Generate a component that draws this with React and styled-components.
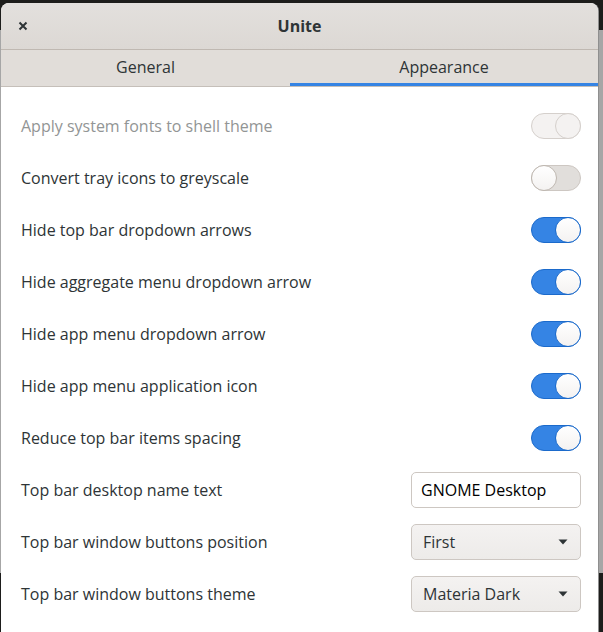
import React, { useState } from 'react'
import styled, { createGlobalStyle } from 'styled-components'

const GlobalStyle = createGlobalStyle`
  html, body {
    margin: 0;
    padding: 0;
  }
  body {
    background: linear-gradient(to bottom, #1d1d1b 0 30px, #a6a6a6 30px 573px, #1d1d1b 573px);
    font-family: "Open Sans", "Noto Sans", sans-serif;
    height: 632px;
    overflow: hidden;
  }
`

const rows = [
  { label: 'Apply system fonts to shell theme', type: 'switch', on: true, disabled: true },
  { label: 'Convert tray icons to greyscale', type: 'switch', on: false },
  { label: 'Hide top bar dropdown arrows', type: 'switch', on: true },
  { label: 'Hide aggregate menu dropdown arrow', type: 'switch', on: true },
  { label: 'Hide app menu dropdown arrow', type: 'switch', on: true },
  { label: 'Hide app menu application icon', type: 'switch', on: true },
  { label: 'Reduce top bar items spacing', type: 'switch', on: true },
  { label: 'Top bar desktop name text', type: 'entry', value: 'GNOME Desktop' },
  { label: 'Top bar window buttons position', type: 'combo', value: 'First' },
  { label: 'Top bar window buttons theme', type: 'combo', value: 'Materia Dark' },
]

function Toggle({ on, disabled }) {
  const [value, setValue] = useState(on)
  return (
    <Switch $on={value} $disabled={disabled} onClick={() => { if (!disabled) setValue(!value) }}>
      <Knob $on={value} $disabled={disabled} />
    </Switch>
  )
}

export default function App() {
  const [tab, setTab] = useState(1)

  return (
    <>
      <GlobalStyle />
      <Window>
        <HeaderBar>
          <CloseButton>
            <svg width="10" height="10" viewBox="0 0 10 10">
              <path d="M1.5 1.5 L8.5 8.5 M8.5 1.5 L1.5 8.5" stroke="#2e3436" strokeWidth="2" />
            </svg>
          </CloseButton>
          <Title>Unite</Title>
        </HeaderBar>
        <Tabs>
          {['General', 'Appearance'].map((name, i) => (
            <Tab key={name} $first={i === 0} $active={tab === i} onClick={() => setTab(i)}>{name}</Tab>
          ))}
        </Tabs>
        <Content>
          {rows.map((row) => (
            <Row key={row.label}>
              <Label $disabled={row.disabled}>{row.label}</Label>
              {row.type === 'switch' && <Toggle on={row.on} disabled={row.disabled} />}
              {row.type === 'entry' && <Entry defaultValue={row.value} />}
              {row.type === 'combo' && (
                <Combo>
                  <span>{row.value}</span>
                  <svg width="10" height="6" viewBox="0 0 10 6">
                    <path d="M0.5 0.5 L9.5 0.5 L5 5.5 Z" fill="#2e3436" />
                  </svg>
                </Combo>
              )}
            </Row>
          ))}
        </Content>
      </Window>
    </>
  )
}

const Window = styled.div`
  position: relative;
  margin: 3px 0 0 1px;
  width: 597px;
  height: 629px;
  background: #fff;
  border-radius: 8px 8px 0 0;
  overflow: hidden;
  display: flex;
  flex-direction: column;
  box-shadow: 1px 0 0 #8f8f8f;
`

const HeaderBar = styled.div`
  height: 46px;
  background: linear-gradient(to bottom, #e3e0dd, #dcd8d4);
  border-bottom: 1px solid #bfb8b1;
  display: flex;
  align-items: center;
  justify-content: center;
  position: relative;
`

const CloseButton = styled.div`
  position: absolute;
  left: 17px;
  top: 18px;
  width: 10px;
  height: 10px;
  display: flex;
`

const Title = styled.div`
  font-weight: 700;
  font-size: 16px;
  color: #2e3436;
  margin-top: -1px;
`

const Tabs = styled.div`
  display: flex;
  height: 36px;
  background: #e1ddd9;
  border-bottom: 1px solid #c5bfb9;
`

const Tab = styled.div`
  flex: ${p => (p.$first ? '0 0 289px' : '1')};
  display: flex;
  align-items: center;
  justify-content: center;
  font-size: 16px;
  color: #2e3436;
  box-sizing: border-box;
  padding-top: 1px;
  border-bottom: 3px solid ${p => (p.$active ? '#3584e4' : 'transparent')};
  cursor: pointer;
`

const Content = styled.div`
  flex: 1;
  padding: 13px 17px 0 20px;
  display: flex;
  flex-direction: column;
`

const Row = styled.div`
  height: 52px;
  display: flex;
  align-items: center;
  justify-content: space-between;
`

const Label = styled.div`
  font-size: 16px;
  color: ${p => (p.$disabled ? '#929595' : '#2e3436')};
`

const Switch = styled.div`
  width: 50px;
  height: 26px;
  box-sizing: border-box;
  border-radius: 13px;
  border: 1px solid ${p => (p.$disabled ? '#d5d0cc' : p.$on ? '#1b6acb' : '#cdc7c2')};
  background: ${p => (p.$disabled ? '#f4f2f1' : p.$on ? '#3584e4' : '#e1dedb')};
  display: flex;
  justify-content: ${p => (p.$on ? 'flex-end' : 'flex-start')};
  align-items: center;
  cursor: pointer;
`

const Knob = styled.div`
  width: 26px;
  height: 26px;
  margin: -1px;
  box-sizing: border-box;
  border-radius: 50%;
  border: 1px solid ${p => (p.$disabled ? '#d5d0cc' : p.$on ? '#1b6acb' : '#bfb8b1')};
  background: ${p => (p.$disabled ? '#f4f2f1' : 'linear-gradient(to bottom, #ffffff, #f4f2f1)')};
`

const Entry = styled.input`
  width: 170px;
  height: 36px;
  box-sizing: border-box;
  border: 1px solid #cdc7c2;
  border-radius: 5px;
  padding: 0 9px;
  font-family: inherit;
  font-size: 16px;
  color: #000;
  outline: none;
`

const Combo = styled.div`
  width: 170px;
  height: 36px;
  box-sizing: border-box;
  border: 1px solid #cdc7c2;
  border-radius: 5px;
  padding: 0 12px 0 11px;
  background: linear-gradient(to bottom, #f4f2f1, #edebe9);
  display: flex;
  align-items: center;
  justify-content: space-between;
  font-size: 16px;
  color: #2e3436;
`
